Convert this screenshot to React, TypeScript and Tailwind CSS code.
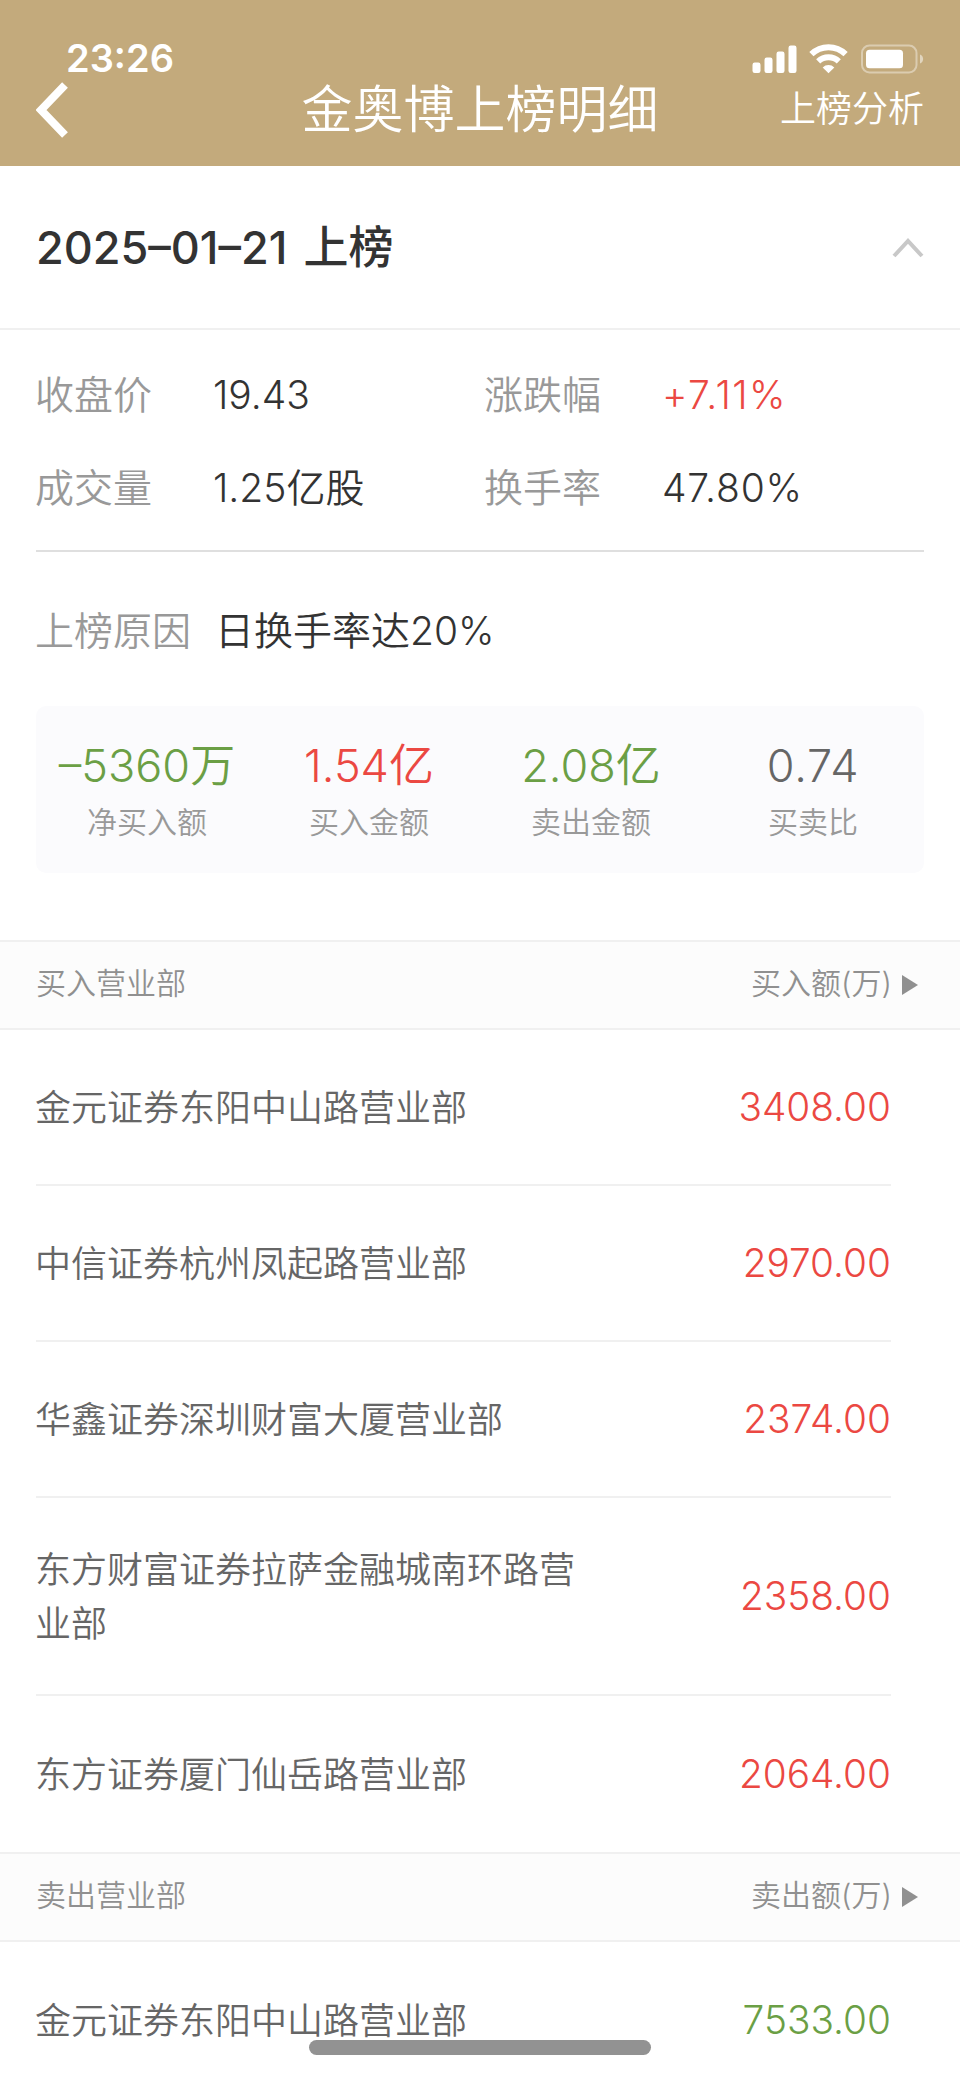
const FONT = "font-['Inter','Noto_Sans_CJK_SC',sans-serif]";

type Row = { name: string; amount: string };

const buyRows: Row[] = [
  { name: "金元证券东阳中山路营业部", amount: "3408.00" },
  { name: "中信证券杭州凤起路营业部", amount: "2970.00" },
  { name: "华鑫证券深圳财富大厦营业部", amount: "2374.00" },
  { name: "东方财富证券拉萨金融城南环路营业部", amount: "2358.00" },
  { name: "东方证券厦门仙岳路营业部", amount: "2064.00" },
];

const sellRows: Row[] = [{ name: "金元证券东阳中山路营业部", amount: "7533.00" }];

const summary = [
  { value: "–5360万", label: "净买入额", color: "text-[#6b9f45]" },
  { value: "1.54亿", label: "买入金额", color: "text-[#eb4842]" },
  { value: "2.08亿", label: "卖出金额", color: "text-[#6b9f45]" },
  { value: "0.74", label: "买卖比", color: "text-[#666666] tracking-[0.7px]" },
];

function StatusIcons() {
  return (
    <svg width="174" height="32" viewBox="0 0 174 32" fill="none">
      <g fill="#fff">
        <rect x="0.5" y="18.5" width="8" height="10.5" rx="2.2" />
        <rect x="12.5" y="13.5" width="8" height="15.5" rx="2.2" />
        <rect x="24.5" y="7.5" width="8" height="21.5" rx="2.2" />
        <rect x="36.5" y="1.5" width="8" height="27.5" rx="2.2" />
      </g>
      <g stroke="#fff" strokeWidth="6">
        <path d="M59.4 10.2a24.4 24.4 0 0 1 34.2 0" />
        <path d="M66.2 17.4a15 15 0 0 1 20.6 0" />
      </g>
      <path d="M76.5 29.2l-5.8-5.8a8.2 8.2 0 0 1 11.6 0z" fill="#fff" />
      <rect x="110" y="1.5" width="54.5" height="27" rx="7.5" stroke="#fff" strokeOpacity="0.4" strokeWidth="2" />
      <rect x="114" y="5.7" width="37" height="18.5" rx="3.5" fill="#fff" />
      <path d="M168 10.5c4.2 1.6 4.2 7.4 0 9z" fill="#fff" fillOpacity="0.5" />
    </svg>
  );
}

function Field({ label, value, color = "text-[#333333]" }: { label: string; value: string; color?: string }) {
  return (
    <div className="-ml-px flex items-center">
      <span className="w-[178px] text-[#999999]">{label}</span>
      <span className={color}>{value}</span>
    </div>
  );
}

function SectionHead({ left, right }: { left: string; right: string }) {
  return (
    <div className="flex h-[90px] items-center justify-between border-y-2 border-[#f0f0f0] bg-[#fcfcfc] pr-[42px] pb-[3px] pl-9 text-[30px] text-[#909090]">
      <span>{left}</span>
      <span className="flex items-center gap-[10px]">
        <span>{right}</span>
        <svg className="mt-[3px]" width="16" height="20" viewBox="0 0 16 20" fill="#909090">
          <path d="M0 0l16 10L0 20z" />
        </svg>
      </span>
    </div>
  );
}

function RowList({ rows, color }: { rows: Row[]; color: string }) {
  return (
    <div className="pr-[69px] pl-9">
      {rows.map((row) => (
        <div
          key={row.name}
          className="flex min-h-[156px] items-center justify-between border-b-2 border-[#f0f0f0] py-[43.5px] last:border-b-0"
        >
          <span className="-ml-px w-[550px] pt-px text-[36px] leading-[54px] text-[#666666]">{row.name}</span>
          <span className={`text-[38.8px] leading-[54px] ${color}`}>{row.amount}</span>
        </div>
      ))}
    </div>
  );
}

export default function App() {
  return (
    <div className={`relative h-[2079px] w-[960px] overflow-hidden bg-white font-[350] ${FONT}`}>
      <header className="h-[166px] bg-[#c3aa7c] text-white">
        <div className="flex h-[76px] items-end justify-between pr-[34px] pl-[66px]">
          <span className="text-[38px] leading-9 font-semibold">23:26</span>
          <StatusIcons />
        </div>
        <div className="grid grid-cols-[1fr_auto_1fr] items-center px-9 pt-px">
          <svg width="32" height="56" viewBox="0 0 32 56" fill="none" stroke="#fff" strokeWidth="8">
            <path d="M29 3L5 28l24 25" />
          </svg>
          <h1 className="text-[51px] leading-[64px]">金奥博上榜明细</h1>
          <span className="pb-[2px] text-right text-[36px] leading-[64px]">上榜分析</span>
        </div>
      </header>

      <section className="flex h-[164px] items-center justify-between border-b-2 border-[#f0f0f0] px-9">
        <h2 className="pt-px text-[45px] font-medium text-[#333333] [word-spacing:4px]">2025–01–21 上榜</h2>
        <svg className="mt-[2px]" width="32" height="20" viewBox="0 0 32 20" fill="none" stroke="#c8c8c8" strokeWidth="4">
          <path d="M2 18L16 3l14 15" />
        </svg>
      </section>

      <section className="px-9">
        <div className="grid h-[222px] grid-cols-[449px_1fr] content-center gap-y-[37px] border-b-2 border-[#dfdfdf] pt-[2px] text-[39px] leading-[56px]">
          <Field label="收盘价" value="19.43" />
          <Field label="涨跌幅" value="+7.11%" color="text-[#eb4842] tracking-[1.4px]" />
          <Field label="成交量" value="1.25亿股" />
          <Field label="换手率" value="47.80%" color="text-[#333333] tracking-[0.8px]" />
        </div>
        <div className="-ml-px flex h-[154px] items-center gap-6 pt-[5px] text-[39px]">
          <span className="text-[#999999]">上榜原因</span>
          <span className="text-[#333333]">日换手率达20%</span>
        </div>
        <div className="grid h-[167px] grid-cols-4 content-center rounded-[10px] bg-[#fbfbfd] pt-[5px] text-center">
          {summary.map((item) => (
            <div key={item.label}>
              <div className={`text-[45px] leading-[60px] ${item.color}`}>{item.value}</div>
              <div className="text-[30px] leading-[52px] text-[#999999]">{item.label}</div>
            </div>
          ))}
        </div>
      </section>

      <div className="mt-[67px]">
        <SectionHead left="买入营业部" right="买入额(万)" />
        <RowList rows={buyRows} color="text-[#eb4842]" />
        <SectionHead left="卖出营业部" right="卖出额(万)" />
        <RowList rows={sellRows} color="text-[#6b9f45]" />
      </div>

      {/* home indicator */}
      <div className="absolute top-[2040px] left-[309px] h-[15px] w-[342px] rounded-full bg-[#929292]" />
    </div>
  );
}
